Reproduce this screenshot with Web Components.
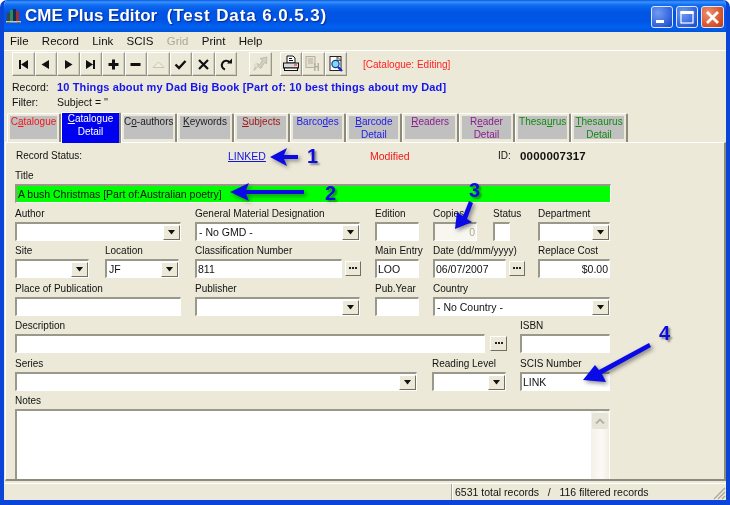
<!DOCTYPE html>
<html>
<head>
<meta charset="utf-8">
<title>CME Plus Editor</title>
<style>
  html, body { margin: 0; padding: 0; background: #fff; overflow: hidden; }
  body { font: 10px "Liberation Sans", Arial, sans-serif; color: #111; }
  u { text-underline-offset: 1px; }
</style>
</head>
<body>
<xp-window>
  <title-bar slot="title">CME Plus Editor  <span style="letter-spacing:.9px">(Test Data 6.0.5.3)</span></title-bar>

  <menu-bar>
    <span>File</span><span>Record</span><span>Link</span><span>SCIS</span><span class="off" style="color:#aca899">Grid</span><span>Print</span><span>Help</span>
  </menu-bar>

  <tool-bar>
    <tool-btn icon="first"></tool-btn><tool-btn icon="prev"></tool-btn><tool-btn icon="next"></tool-btn><tool-btn icon="last"></tool-btn><tool-btn icon="plus"></tool-btn><tool-btn icon="minus"></tool-btn><tool-btn icon="up"></tool-btn><tool-btn icon="check"></tool-btn><tool-btn icon="cross"></tool-btn><tool-btn icon="redo"></tool-btn>
    <tool-btn icon="move" style="margin-left:12px"></tool-btn>
    <tool-btn icon="print" style="margin-left:8px"></tool-btn><tool-btn icon="form"></tool-btn><tool-btn icon="preview"></tool-btn>
    <span style="margin-left:16px;color:#f22">[Catalogue: Editing]</span>
  </tool-bar>

  <info-row name="Record:" bold>10 Things about my Dad Big Book [Part of: 10 best things about my Dad]</info-row>
  <info-row name="Filter:">Subject = ''</info-row>

  <tab-strip>
    <tab-item w="54" color="#f01818">C<u>a</u>talogue</tab-item>
    <tab-item w="60" selected color="#fff"><u>C</u>atalogue<br>Detail</tab-item>
    <tab-item color="#222">C<u>o</u>-authors</tab-item>
    <tab-item color="#222"><u>K</u>eywords</tab-item>
    <tab-item color="#a01818"><u>S</u>ubjects</tab-item>
    <tab-item color="#1c1ce8">Barco<u>d</u>es</tab-item>
    <tab-item color="#1c1ce8"><u>B</u>arcode<br>Detail</tab-item>
    <tab-item color="#8c1c8c"><u>R</u>eaders</tab-item>
    <tab-item color="#8c1c8c">R<u>e</u>ader<br>Detail</tab-item>
    <tab-item color="#148a14">Thesa<u>u</u>rus</tab-item>
    <tab-item color="#148a14"><u>T</u>hesaurus<br>Detail</tab-item>
  </tab-strip>

  <form-panel>
    <status-row></status-row>

    <form-row style="height:38px">
      <form-field label="Title" w="596"><text-box green value="A bush Christmas [Part of:Australian poetry]"></text-box></form-field>
    </form-row>

    <form-row style="height:38px">
      <form-field label="Author" w="166"><combo-box></combo-box></form-field>
      <form-field label="General Material Designation" w="165" ml="14"><combo-box value="- No GMD -"></combo-box></form-field>
      <form-field label="Edition" w="44" ml="15"><text-box></text-box></form-field>
      <form-field label="Copies" w="44" ml="14"><text-box disabled right value="0"></text-box></form-field>
      <form-field label="Status" w="17" ml="16"><text-box></text-box></form-field>
      <form-field label="Department" w="72" ml="28"><combo-box></combo-box></form-field>
    </form-row>

    <form-row style="height:37px">
      <form-field label="Site" w="74"><combo-box></combo-box></form-field>
      <form-field label="Location" w="74" ml="16"><combo-box value="JF"></combo-box></form-field>
      <form-field label="Classification Number" w="166" ml="16"><text-box value="811"></text-box><dots-btn></dots-btn></form-field>
      <form-field label="Main Entry" w="44" ml="14"><text-box value="LOO"></text-box></form-field>
      <form-field label="Date (dd/mm/yyyy)" w="92" ml="14"><text-box value="06/07/2007"></text-box><dots-btn></dots-btn></form-field>
      <form-field label="Replace Cost" w="72" ml="13"><text-box right value="$0.00"></text-box></form-field>
    </form-row>

    <form-row style="height:38px">
      <form-field label="Place of Publication" w="166"><text-box></text-box></form-field>
      <form-field label="Publisher" w="165" ml="14"><combo-box></combo-box></form-field>
      <form-field label="Pub.Year" w="44" ml="15"><text-box></text-box></form-field>
      <form-field label="Country" w="177" ml="14"><combo-box value="- No Country -"></combo-box></form-field>
    </form-row>

    <form-row style="height:37px">
      <form-field label="Description" w="492"><text-box></text-box><dots-btn wide></dots-btn></form-field>
      <form-field label="ISBN" w="90" ml="13"><text-box></text-box></form-field>
    </form-row>

    <form-row style="height:38px">
      <form-field label="Series" w="402"><combo-box></combo-box></form-field>
      <form-field label="Reading Level" w="74" ml="15"><combo-box></combo-box></form-field>
      <form-field label="SCIS Number" w="90" ml="14"><text-box value="LINK"></text-box></form-field>
    </form-row>

    <form-row style="height:92px">
      <form-field label="Notes" w="595" tall><notes-box></notes-box></form-field>
    </form-row>
  </form-panel>

  <status-bar>6531 total records   /   116 filtered records</status-bar>

  <call-outs></call-outs>
</xp-window>

<script>
  // small helper, every element is just a shadow root with a style and some markup
  class Base extends HTMLElement {
    constructor() {
      super();
      this.attachShadow({ mode: 'open' });
    }
    connectedCallback() {
      this.render();
    }
  }

  class XpWindow extends Base {
    render() {
      this.shadowRoot.innerHTML = `
        <style>
          :host {
            display: flex; flex-direction: column; position: relative;
            width: 730px; height: 505px; box-sizing: border-box; overflow: hidden;
            border-radius: 7px 7px 0 0;
            background: #ece9d8;
            border-left: 4px solid #0a45d8; border-right: 4px solid #0a45d8; border-bottom: 5px solid #0a45d8;
            filter: blur(.4px);
          }
        </style>
        <slot name="title"></slot>
        <slot></slot>`;
    }
  }

  class TitleBar extends Base {
    render() {
      this.shadowRoot.innerHTML = `
        <style>
          :host {
            display: flex; align-items: center; height: 32px; flex: none;
            margin: 0 -4px; padding: 0 5px;
            background: linear-gradient(#0a58dc 0, #3a93ff 2px, #0f6cf0 5px, #0055e5 12px, #0055e5 22px, #0062f2 27px, #0052d8 32px);
          }
          svg { flex: none; margin-right: 3px; }
          .t {
            font: bold 17px "Liberation Sans", Arial, sans-serif; color: #fff; white-space: pre;
            text-shadow: 1px 1px 1px #0a2a90;
          }
          .btns { margin-left: auto; display: flex; gap: 3px; margin-right: 1px; padding-top: 2px; }
          .b {
            width: 22px; height: 22px; box-sizing: border-box; border: 1px solid #dfe8fb; border-radius: 3px;
            background: radial-gradient(circle at 30% 30%, #6f9cf2, #2f5fdc 70%, #1c42b8);
            display: flex; align-items: center; justify-content: center;
          }
          .b svg { margin: 0; }
          .c { background: radial-gradient(circle at 30% 30%, #ee9070, #d9522a 65%, #b83a14); width: 23px; }
        </style>
        <svg width="17" height="17" viewBox="0 0 17 17">
          <rect x="2" y="5" width="3" height="8" fill="#3a4a3a"/>
          <rect x="5" y="2" width="3" height="11" fill="#2a8a6a"/>
          <rect x="8" y="1" width="3" height="12" fill="#1a2a50"/>
          <rect x="11" y="3" width="3" height="10" fill="#a03030"/>
          <rect x="1" y="13" width="15" height="1.500" fill="#c8c8b8"/>
          <path d="M2 14.500h3v1.500H2zM12 14.500h3v1.500h-3z" fill="#55554a"/>
        </svg>
        <span class="t"><slot></slot></span>
        <div class="btns">
          <div class="b"><svg width="16" height="16"><rect x="2" y="11" width="8" height="3" fill="#fff"/></svg></div>
          <div class="b"><svg width="16" height="16"><rect x="2" y="3" width="12" height="11" fill="none" stroke="#fff" stroke-width="1.200"/><rect x="1.500" y="2" width="13" height="3" fill="#fff"/></svg></div>
          <div class="b c"><svg width="17" height="17"><path d="M3 3l11 11M14 3L3 14" stroke="#fff" stroke-width="2.800"/></svg></div>
        </div>`;
    }
  }

  class MenuBar extends Base {
    render() {
      this.shadowRoot.innerHTML = `
        <style>
          :host {
            display: flex; align-items: center; gap: 13.300px; flex: none; height: 18px;
            padding-left: 6px; border-bottom: 1px solid #fff; font-size: 11.500px;
          }
        </style>
        <slot></slot>`;
    }
  }

  class ToolBar extends Base {
    render() {
      this.shadowRoot.innerHTML = `
        <style>
          :host {
            display: flex; align-items: center; flex: none; height: 28px; box-sizing: border-box;
            padding: 0 0 2px 8px;
          }
        </style>
        <slot></slot>`;
    }
  }

  const ICONS = {
    first: '<path d="M3 3h2v9H3zM5 7.500L12 3v9z" fill="#111"/>',
    prev: '<path d="M3.500 7.500L11 3v9z" fill="#111"/>',
    next: '<path d="M11.500 7.500L4 3v9z" fill="#111"/>',
    last: '<path d="M10 3h2v9h-2zM10 7.500L3 3v9z" fill="#111"/>',
    plus: '<path d="M6 2.500h3v3.500h3.500v3H9v3.500H6V9H2.500V6H6z" fill="#111"/>',
    minus: '<rect x="2.500" y="6" width="10" height="3" fill="#111"/>',
    up: '<path d="M2 10.500L7.500 5 13 10.500z" fill="#f0eee2" stroke="#c8c5b2"/>',
    check: '<path d="M2.500 7.500L6 11l6.500-7" fill="none" stroke="#111" stroke-width="2.400"/>',
    cross: '<path d="M3 3l9 9M12 3l-9 9" fill="none" stroke="#111" stroke-width="2.200"/>',
    redo: '<path d="M11.500 5A4.500 4.500 0 1 0 7 12.500" fill="none" stroke="#111" stroke-width="2"/><path d="M9 6.500h5V1.500z" fill="#111"/>',
    move: '<path d="M3 15.500L5.500 8l3 2 3-5L9 3.500 16 2l-.5 7-2-1.500-3.500 6-3-2z" fill="#d2d0c2" stroke="#b4b2a4" stroke-width=".7"/><path d="M2 10l4-3v6z" fill="#e0ddcd"/>',
    print: '<path d="M5 1h6l2 2v5H5z" fill="#fff" stroke="#111"/><path d="M7 3.500h3M7 5.500h4" stroke="#111"/><rect x="1.500" y="8" width="15" height="5" fill="#d8d8d8" stroke="#111"/><rect x="2.500" y="13" width="13" height="2.500" fill="#fff" stroke="#111"/><rect x="12" y="9.500" width="3" height="1" fill="#e02020"/>',
    form: '<rect x="2" y="1.500" width="9" height="11" fill="#e4e1d0" stroke="#b4b1a0"/><path d="M4 4h5M4 6h5M4 8h5" stroke="#b4b1a0"/><path d="M10 8h1.500v3h2V8H15v8h-1.500v-3.500h-2V16H10z" fill="#b4b1a0"/>',
    preview: '<rect x="3" y="1.500" width="11" height="14" fill="#fff" stroke="#222"/><path d="M10 1.500l4 4h-4z" fill="#ccc" stroke="#222" stroke-width=".7"/><circle cx="8.500" cy="9" r="3.600" fill="#7fdcee" stroke="#1a3aa0" stroke-width="1.200"/><path d="M11 12l4 4" stroke="#1a2ac0" stroke-width="2.400"/>'
  };
  const BIG = ['move', 'print', 'form', 'preview'];

  class ToolBtn extends Base {
    render() {
      const name = this.getAttribute('icon');
      const big = BIG.includes(name);
      const vb = big ? '0 0 18 18' : '0 0 15 15';
      const size = big ? 18 : 15;
      this.shadowRoot.innerHTML = `
        <style>
          :host {
            display: flex; align-items: center; justify-content: center; flex: none;
            width: 22.500px; height: 24px; box-sizing: border-box;
            background: #ece9d8;
            border: 1px solid; border-color: #fff #9a9888 #8c8a7c #fff;
            box-shadow: inset -1px -1px 0 #d0cdbc;
          }
        </style>
        <svg width="${size}" height="${size}" viewBox="${vb}">${ICONS[name]}</svg>`;
    }
  }

  class InfoRow extends Base {
    render() {
      const bold = this.hasAttribute('bold');
      this.shadowRoot.innerHTML = `
        <style>
          :host { display: flex; align-items: center; flex: none; height: 15.500px; padding-left: 8px; white-space: nowrap; }
          .n { width: 45px; flex: none; font-size: 10.500px; }
          .v { ${bold ? 'font-weight: bold; color: #1414f0; font-size: 11px; letter-spacing: .13px;' : 'font-size: 10.500px;'} }
        </style>
        <span class="n">${this.getAttribute('name')}</span><span class="v"><slot></slot></span>`;
    }
  }

  class TabStrip extends Base {
    render() {
      this.shadowRoot.innerHTML = `
        <style>
          :host { display: flex; flex: none; height: 31px; margin-top: 2px; padding-left: 3px; position: relative; z-index: 2; margin-bottom: -1px; align-items: flex-start; }
        </style>
        <slot></slot>`;
    }
  }

  class TabItem extends Base {
    render() {
      const sel = this.hasAttribute('selected');
      this.shadowRoot.innerHTML = `
        <style>
          :host {
            display: block; box-sizing: border-box; width: ${this.getAttribute('w') || 56.3}px; height: ${sel ? 31 : 29}px; flex: none;
            padding: ${sel ? '0' : '2px 2px 3px 2px'};
            ${sel ? 'margin-top:0;' : 'margin-top:1px;'}
            border-top: 1px solid #fff; border-left: 1px solid #fff; border-right: 2px solid #8c8a7c;
            border-radius: 2px 2px 0 0;
          }
          .in {
            display: block; height: 100%; text-align: center; line-height: 12.500px; font-size: 10px; white-space: nowrap;
            overflow: hidden; box-sizing: border-box;
            background: ${sel ? '#0000f0' : '#c0c0c0'}; color: ${this.getAttribute('color')};
          }
        </style>
        <span class="in"><slot></slot></span>`;
    }
  }

  class FormPanel extends Base {
    render() {
      this.shadowRoot.innerHTML = `
        <style>
          :host {
            display: block; flex: none; height: 339px; box-sizing: border-box; overflow: hidden;
            padding: 3px 0 0 9px; margin-left: 1px; position: relative;
            border-top: 1px solid #fff; border-left: 1px solid #fff;
            border-right: 2px solid #8c8a7c; border-bottom: 2px solid #8c8a7c;
          }
        </style>
        <slot></slot>`;
    }
  }

  class StatusRow extends Base {
    render() {
      this.shadowRoot.innerHTML = `
        <style>
          :host { display: grid; grid-template-columns: 212px 142px 128px 22px auto; align-items: center; height: 19px; padding-left: 1px; }
          a { color: #1414e0; text-decoration: underline; font-size: 10.500px; }
          .m { color: #f01818; font-size: 10.500px; }
          .i { font-weight: bold; font-size: 11.500px; letter-spacing: .2px; }
        </style>
        <span>Record Status:</span><a>LINKED</a><span class="m">Modified</span><span>ID:</span><span class="i">0000007317</span>`;
    }
  }

  class FormRow extends Base {
    render() {
      this.shadowRoot.innerHTML = `
        <style>:host { display: flex; align-items: flex-end; }</style>
        <slot></slot>`;
    }
  }

  class FormField extends Base {
    render() {
      const tall = this.hasAttribute('tall');
      this.shadowRoot.innerHTML = `
        <style>
          :host {
            display: flex; flex-direction: column; flex: none; justify-content: flex-end;
            width: ${this.getAttribute('w')}px; margin-left: ${this.getAttribute('ml') || 0}px;
            height: 100%;
          }
          .l { line-height: 15px; white-space: nowrap; flex: none; padding-bottom: 1px; }
          .c { display: flex; align-items: center; gap: 3px; height: ${tall ? 74 : 19}px; flex: none; }
        </style>
        <div class="l">${this.getAttribute('label')}</div>
        <div class="c"><slot></slot></div>`;
    }
  }

  const SUNKEN = `
    box-sizing: border-box; border-style: solid; border-width: 2px 1px 1px 2px;
    border-color: #9a988a #fff #fff #9a988a;`;

  class TextBox extends Base {
    render() {
      const green = this.hasAttribute('green');
      const off = this.hasAttribute('disabled');
      this.shadowRoot.innerHTML = `
        <style>
          :host {
            display: flex; align-items: center; flex: 1; min-width: 0; height: 19px; ${SUNKEN}
            padding: 0 1px; background: ${green ? '#00ff00' : off ? '#f7f6ef' : '#fff'};
            color: ${off ? '#aca899' : '#111'}; white-space: nowrap; overflow: hidden;
            font-size: 10.500px;
            justify-content: ${this.hasAttribute('right') ? 'flex-end' : 'flex-start'};
          }
        </style>
        <span>${this.getAttribute('value') || ''}</span>`;
    }
  }

  class ComboBox extends Base {
    render() {
      this.shadowRoot.innerHTML = `
        <style>
          :host {
            display: flex; align-items: center; flex: 1; min-width: 0; height: 19px; ${SUNKEN}
            padding-left: 2px; background: #fff; white-space: nowrap; overflow: hidden; font-size: 10.500px;
          }
          span { flex: 1; }
          .b {
            flex: none; box-sizing: border-box; width: 17px; height: 15px; background: #ece9d8; margin-right: 0;
            border: 1px solid; border-color: #fff #716f64 #716f64 #fff;
            display: flex; align-items: center; justify-content: center;
          }
        </style>
        <span>${this.getAttribute('value') || ''}</span>
        <div class="b"><svg width="9" height="5"><path d="M1 0h7L4.500 4.500z" fill="#111"/></svg></div>`;
    }
  }

  class DotsBtn extends Base {
    render() {
      this.shadowRoot.innerHTML = `
        <style>
          :host {
            display: flex; align-items: center; justify-content: center; flex: none; box-sizing: border-box;
            width: ${this.hasAttribute('wide') ? 17 : 16}px; height: 15px; background: #ece9d8;
            ${this.hasAttribute('wide') ? 'margin-left: 2px;' : ''}
            border: 1px solid; border-color: #fff #716f64 #716f64 #fff;
          }
        </style>
        <svg width="8" height="3"><path d="M0 0h2v2H0zM3 0h2v2H3zM6 0h2v2H6z" fill="#222"/></svg>`;
    }
  }

  class NotesBox extends Base {
    render() {
      this.shadowRoot.innerHTML = `
        <style>
          :host {
            display: flex; justify-content: flex-end; flex: 1; height: 74px; ${SUNKEN}
            background: #fff;
          }
          .sb { width: 18px; background: linear-gradient(90deg, #f3f1e8, #fbfaf6 60%, #f0eee4); position: relative; }
          .u {
            box-sizing: border-box; height: 16px; margin: 2px 1px 0; border: 1px solid #e6e3d6; border-radius: 2px;
            background: #e7e5d8; display: flex; align-items: center; justify-content: center;
          }
        </style>
        <div class="sb"><div class="u"><svg width="10" height="7"><path d="M1 5.500L5 1.500l4 4" fill="none" stroke="#b4b2a4" stroke-width="1.800"/></svg></div></div>`;
    }
  }

  class StatusBar extends Base {
    render() {
      this.shadowRoot.innerHTML = `
        <style>
          :host {
            display: flex; align-items: center; flex: none; height: 16px; margin-top: 2px; margin-left: 0;
            padding-left: 447px; position: relative; border-top: 1px solid #fff; box-sizing: content-box;
            white-space: pre; font-size: 10.500px;
          }
          .d { position: absolute; left: 447px; top: 0; bottom: 0; width: 1px; background: #a8a698; box-shadow: 1px 0 0 #fff; }
          .t { padding-left: 4px; }
          svg { position: absolute; right: 0; bottom: 0; }
        </style>
        <div class="d"></div>
        <span class="t"><slot></slot></span>
        <svg width="13" height="13"><path d="M12 1L1 12M12 5L5 12M12 9L9 12" stroke="#a8a698" stroke-width="1.200"/></svg>`;
    }
  }

  // the four blue arrows and numbers drawn over the screenshot
  class CallOuts extends Base {
    render() {
      this.shadowRoot.innerHTML = `
        <style>
          :host { position: absolute; left: -4px; top: 0; width: 730px; height: 505px; pointer-events: none; z-index: 5; }
          svg { position: absolute; inset: 0; filter: drop-shadow(2px 2px 2px rgba(40, 40, 40, .55)); }
          span {
            position: absolute; color: #0c0ce0; font: bold 20px "Liberation Sans", Arial, sans-serif; line-height: 20px;
            text-shadow: 2px 2px 2px rgba(40, 40, 40, .5);
          }
        </style>
        <svg width="730" height="505" viewBox="0 0 730 505">
          <g fill="#0a0ae6">
            <path d="M270 157L287 148L284 155H298V159H284L287 166z"/>
            <path d="M230 192L249 183L246 190H304V194H246L249 201z"/>
            <path d="M455 229L457 212L463 216L469 201L473 203L467 219L472 222z"/>
            <path d="M583 380L595 365L599 370L649 343L651 347L602 374L606 382z"/>
          </g>
        </svg>
        <span style="left:307px;top:146px">1</span>
        <span style="left:325px;top:183px">2</span>
        <span style="left:469px;top:180px">3</span>
        <span style="left:659px;top:323px">4</span>`;
    }
  }

  customElements.define('xp-window', XpWindow);
  customElements.define('title-bar', TitleBar);
  customElements.define('menu-bar', MenuBar);
  customElements.define('tool-bar', ToolBar);
  customElements.define('tool-btn', ToolBtn);
  customElements.define('info-row', InfoRow);
  customElements.define('tab-strip', TabStrip);
  customElements.define('tab-item', TabItem);
  customElements.define('form-panel', FormPanel);
  customElements.define('status-row', StatusRow);
  customElements.define('form-row', FormRow);
  customElements.define('form-field', FormField);
  customElements.define('text-box', TextBox);
  customElements.define('combo-box', ComboBox);
  customElements.define('dots-btn', DotsBtn);
  customElements.define('notes-box', NotesBox);
  customElements.define('status-bar', StatusBar);
  customElements.define('call-outs', CallOuts);
</script>
</body>
</html>
